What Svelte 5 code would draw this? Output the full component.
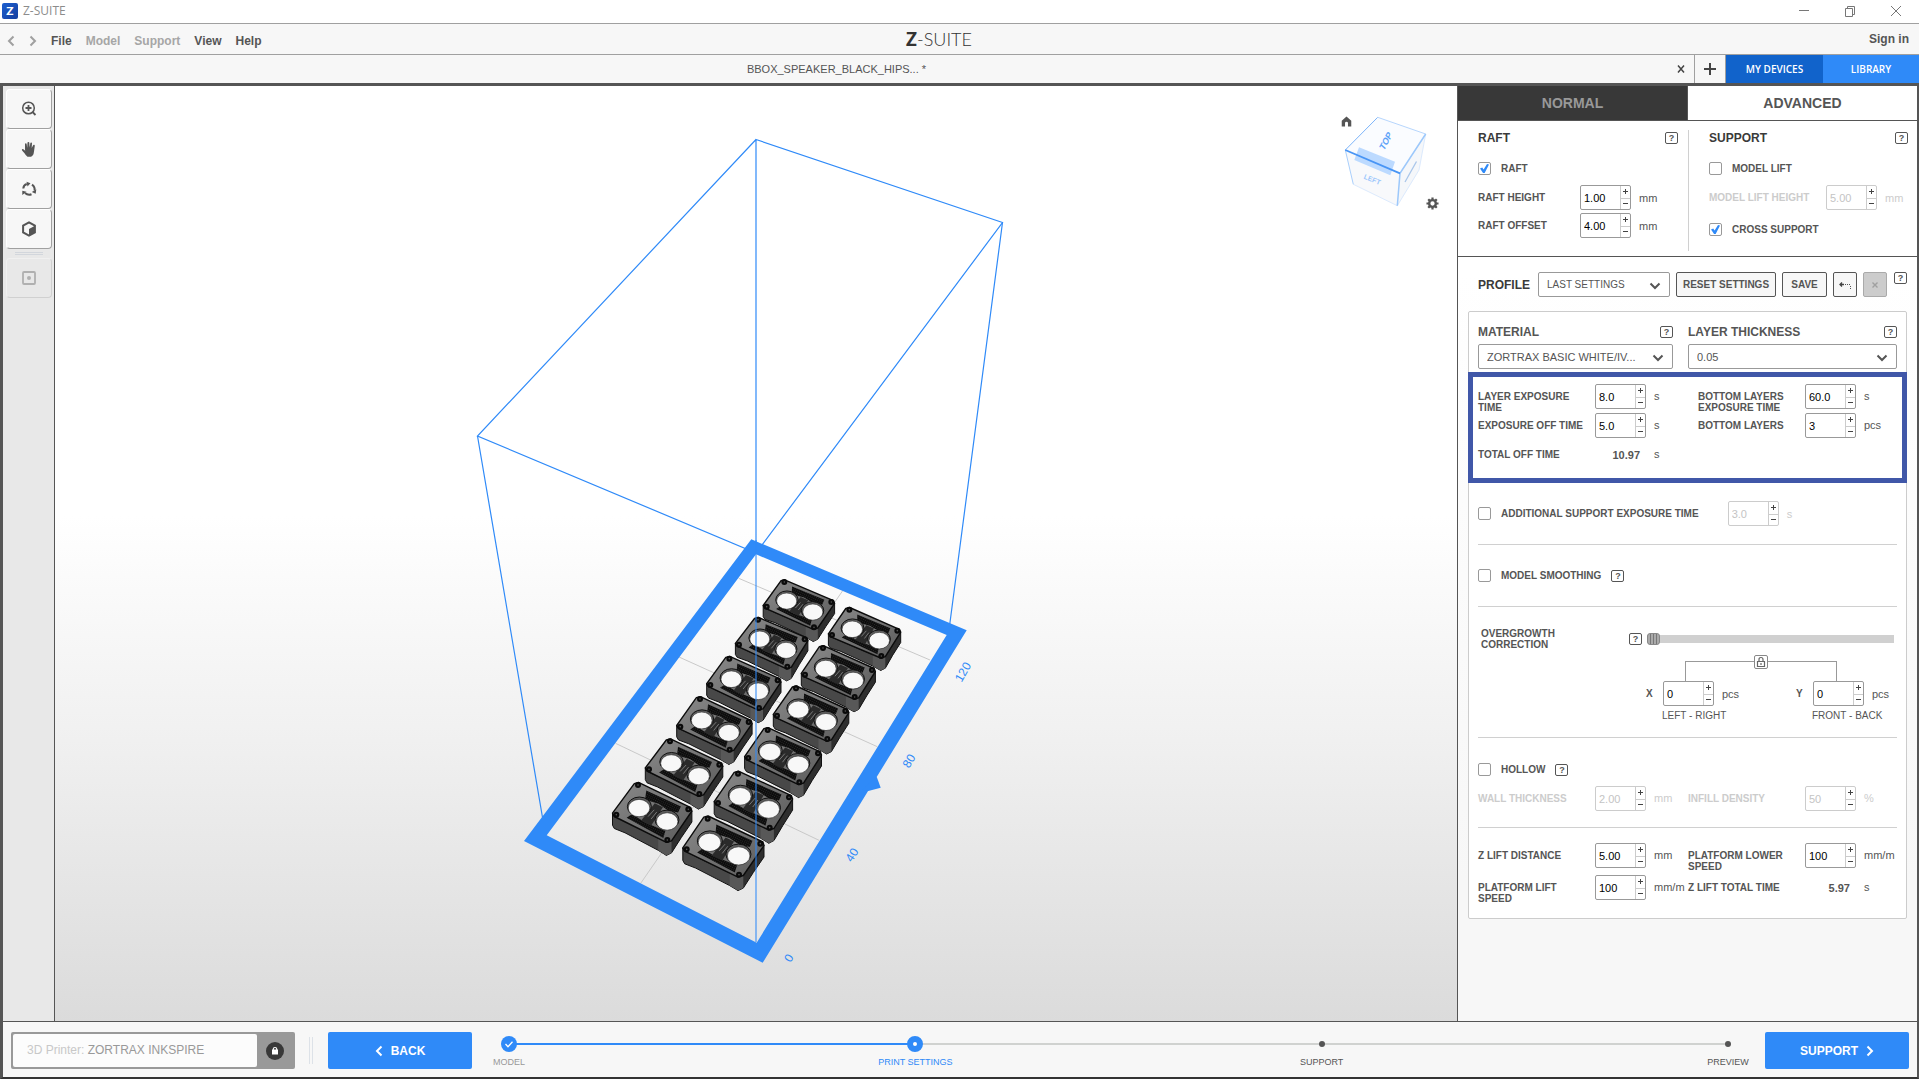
<script>
  const menu = [
    { label: 'File', off: false },
    { label: 'Model', off: true },
    { label: 'Support', off: true },
    { label: 'View', off: false },
    { label: 'Help', off: false },
  ];

  const steps = [
    { label: 'MODEL', state: 'done' },
    { label: 'PRINT SETTINGS', state: 'current' },
    { label: 'SUPPORT', state: 'todo' },
    { label: 'PREVIEW', state: 'todo' },
  ];

  // Screw positions of every part on the platform: top, right, left, bottom
  const parts = [
    [853, 186, 994, 246, 800, 260, 942, 322],
    [1048, 269, 1192, 332, 996, 345, 1144, 408],
    [774, 299, 914, 358, 717, 374, 862, 440],
    [969, 384, 1116, 450, 915, 464, 1064, 531],
    [688, 416, 833, 481, 631, 495, 777, 564],
    [888, 505, 1036, 573, 831, 587, 982, 657],
    [600, 537, 746, 606, 541, 620, 689, 689],
    [803, 630, 954, 700, 745, 714, 898, 787],
    [510, 664, 658, 734, 447, 748, 598, 822],
    [714, 761, 867, 832, 654, 849, 809, 923],
    [414, 795, 565, 868, 349, 884, 502, 960],
    [623, 896, 781, 971, 560, 988, 717, 1064],
  ].map((c) => build(c));

  function build(c) {
    const at = (u, v, down = 0) => {
      const mix = (i) =>
        (1 - u) * (1 - v) * c[i] + u * (1 - v) * c[i + 2] + (1 - u) * v * c[i + 4] + u * v * c[i + 6];
      return [500 + mix(0) / 3, 520 + mix(1) / 3 + down];
    };
    const path = (pts) =>
      'M' + pts.map((p) => at(...p).map((n) => n.toFixed(1)).join(' ')).join('L') + 'Z';
    const s = (c[2] - c[0]) / 151;
    const d = 12 * s;
    const a = -0.07;
    const b = 1.07;
    const ring = [[a + 0.05, a], [b - 0.05, a], [b, a + 0.07], [b, b - 0.1], [b - 0.06, b], [a + 0.06, b], [a, b - 0.06], [a, a + 0.08]];
    return {
      s,
      top: path(ring),
      left: path([[a, b - 0.06], [a + 0.06, b], [b - 0.06, b], [b - 0.06, b, d + 1], [0.85, b, d], [0.2, b, d - 1], [a + 0.06, b, d], [a, b - 0.06, d]]),
      right: path([[b - 0.06, b], [b, b - 0.1], [b, a + 0.07], [b, a + 0.07, d - 1], [b, 0.5, d - 1], [b, b - 0.1, d], [b - 0.06, b, d + 1]]),
      shade: path([[0.85, b], [b - 0.06, b], [b, b - 0.1], [b, b - 0.1, d], [b - 0.06, b, d + 1], [0.85, b, d]]),
      meshA: path([[0.18, 0.04], [0.86, 0.02], [0.88, 0.2], [0.72, 0.27], [0.5, 0.22], [0.26, 0.28]]),
      meshB: path([[0.18, 0.95], [0.22, 0.79], [0.5, 0.84], [0.88, 0.8], [0.92, 1]]),
      core: path([[0.44, 0.25], [0.6, 0.25], [0.62, 0.85], [0.42, 0.85]]),
      slotA: [at(0.5, 0.42), at(0.48, 0.66)],
      slotB: [at(0.56, 0.44), at(0.55, 0.68)],
      holes: [at(0.26, 0.56), at(0.81, 0.55)],
      rims: [at(0.25, 0.52), at(0.79, 0.51)],
      screws: [at(0, 0), at(1, 0), at(0, 1), at(1, 1)],
    };
  }
</script>

{#snippet help(topic)}
  <button class="help" aria-label={'Help: ' + topic}>?</button>
{/snippet}

{#snippet spin(id, value, disabled = false)}
  <span class="spin" class:off={disabled}>
    <input {id} type="text" {value} {disabled} />
    <span class="arrows">
      <button aria-label="Increase"><svg viewBox="0 0 9 9"><path d="M4.5 2v5M2 4.5h5" /></svg></button>
      <button aria-label="Decrease"><svg viewBox="0 0 9 9"><path d="M2 4.5h5" /></svg></button>
    </span>
  </span>
{/snippet}

{#snippet drop(id, value, small = false)}
  <span class="drop" class:small>
    <select {id} aria-label={id}><option>{value}</option></select>
    <svg viewBox="0 0 12 8"><path d="M1.5 1.5L6 6l4.500-4.500" /></svg>
  </span>
{/snippet}

<div class="app">
  <header class="titlebar">
    <span class="appicon">Z</span>
    <span class="apptitle">Z-SUITE</span>
    <div class="winbtns">
      <button aria-label="Minimize"><svg viewBox="0 0 12 12"><path d="M1 5.500h10" /></svg></button>
      <button aria-label="Restore"><svg viewBox="0 0 12 12"><path d="M1.500 3.500h7v8h-7zM3.500 3.500v-2h7v8h-2" /></svg></button>
      <button aria-label="Close"><svg viewBox="0 0 12 12"><path d="M1 1l10 10M11 1L1 11" /></svg></button>
    </div>
  </header>

  <nav class="menubar">
    <div class="menuleft">
      <button class="hist" aria-label="Undo"><svg viewBox="0 0 8 12"><path d="M6.500 1.500L2 6l4.500 4.500" /></svg></button>
      <button class="hist" aria-label="Redo"><svg viewBox="0 0 8 12"><path d="M1.500 1.500L6 6l-4.500 4.500" /></svg></button>
      {#each menu as m}
        <button class="menu" class:dim={m.off}>{m.label}</button>
      {/each}
    </div>
    <div class="logo"><b>Z</b><span>-SUITE</span></div>
    <a class="signin" href="#signin">Sign in</a>
  </nav>

  <div class="tabbar">
    <div class="filetab">
      <span class="filename">BBOX_SPEAKER_BLACK_HIPS... *</span>
      <button class="closetab" aria-label="Close file"><svg viewBox="0 0 10 10"><path d="M2 1.500l6 7M8 1.500l-6 7" /></svg></button>
    </div>
    <button class="addtab" aria-label="New file"><svg viewBox="0 0 14 14"><path d="M7 1v12M1 7h12" /></svg></button>
    <button class="devices">MY DEVICES</button>
    <button class="library">LIBRARY</button>
  </div>

  <main class="work">
    <aside class="tools">
      <button aria-label="Zoom">
        <svg viewBox="0 0 16 16"><circle cx="7.500" cy="7" r="5.800" fill="none" stroke="#555" stroke-width="1.500" /><path d="M7.500 4v6M4.500 7h6M11.500 11l3 3" fill="none" stroke="#555" stroke-width="1.800" /></svg>
      </button>
      <button aria-label="Pan">
        <svg viewBox="0 0 16 16"><path d="M4 8.500V3.200q0-.9.800-.9t.9.900L6.200 7l.3-5.200q0-.9.900-.9t.9.900L8.600 6.500l.7-4.300q.1-.8.900-.8t.8.900l-.3 4.700 1.400-2.800q.4-.7 1.100-.4t.6 1L13 10.500q-.5 4.500-3 5.200H6.500Q5 15 3.500 12.300L1.100 9.500q-.5-.7 0-1.200t1.300-.1L4.200 9.700z" fill="#555" /></svg>
      </button>
      <button aria-label="Rotate">
        <svg viewBox="0 0 16 16"><g fill="none" stroke="#555" stroke-width="2"><path d="M2.300 7.500Q2.500 4 5.800 3" /><path d="M11 3.600Q14.300 6 13.500 9.500" /><path d="M10.500 13.200Q7 14.600 4 12" /></g><path d="M5.500.8l4 1.500-3 3.200zM15.300 8.300l-.6 4.400-3.900-1.600zM1.300 14V9.700l4.200 1.100z" fill="#555" /></svg>
      </button>
      <button aria-label="Perspective">
        <svg viewBox="0 0 16 16"><path d="M8 1.400l5.900 3.300v6.700L8 14.700l-5.900-3.300V4.700z" fill="none" stroke="#555" stroke-width="2" /><path d="M8 8l5.500-3v6.500L8 14.500z" fill="#555" /></svg>
      </button>
      <div class="toolsep"></div>
      <button class="inactive" aria-label="Center model" disabled>
        <svg viewBox="0 0 16 16"><rect x="2" y="2" width="12" height="12" rx="1" fill="none" stroke="#b0b0b0" stroke-width="1.800" /><circle cx="8" cy="8" r="2" fill="#b0b0b0" /></svg>
      </button>
    </aside>

    <section class="viewport" aria-label="Build platform">
      <svg class="scene" viewBox="55 86 1402 935">
        <defs>
          <pattern id="mesh" width="2" height="2" patternUnits="userSpaceOnUse" patternTransform="rotate(25)">
            <rect width="2" height="2" fill="#0b0b0b" />
            <rect width="0.700" height="0.700" fill="#4a4a4a" />
          </pattern>
          <linearGradient id="lid" x1="0" y1="0" x2="1" y2="1">
            <stop offset="0" stop-color="#8a8a8a" />
            <stop offset="1" stop-color="#5c5c5c" />
          </linearGradient>
        </defs>
        <g stroke="#2f8af8" stroke-width="1.200" fill="none">
          <path d="M756 553V139.500L1002.500 222.500L756 553L477.500 436L756 139.500" />
          <path d="M477.500 436L546 838M1002.500 222.500L949 630" />
        </g>
        <path d="M756 554.300L946.700 635L756.700 942.700L546.700 835.300Z" fill="#fff" fill-opacity=".15" />
        <g stroke="#c9c9c9" fill="none">
          <path d="M738.700 578.300L930 660M679 657L877.300 746.700M615.500 743.300L819 840.300M842.700 590.700L640.700 883.300" />
        </g>
        <path fill="#2f8af8" fill-rule="evenodd" d="M751.300 539.300L966.700 630.300L762.700 962.700L524 841ZM756 554.300L546.700 835.300L756.700 942.700L946.700 635Z" />
        <path fill="#2f8af8" d="M876.700 776.700L880.700 787.700L868.300 791L862 790Z" />
        {#each parts as p}
          <g stroke-linejoin="round">
            <path d={p.left} fill="#484848" stroke="#111" />
            <path d={p.right} fill="#2e2e2e" stroke="#111" />
            <path d={p.shade} fill="#585858" />
            <path d={p.top} fill="url(#lid)" stroke="#0c0c0c" stroke-width="1.400" />
            <path d={p.meshA} fill="url(#mesh)" />
            <path d={p.meshB} fill="url(#mesh)" />
            <path d={p.core} fill="#2a2a2a" />
            {#each p.rims as r}
              <ellipse cx={r[0]} cy={r[1]} rx={12 * p.s} ry={9.600 * p.s} fill="#5c5c5c" stroke="#111" />
            {/each}
            {#each p.holes as h}
              <ellipse cx={h[0]} cy={h[1]} rx={10.800 * p.s} ry={8.700 * p.s} fill="#f8f8f8" stroke="#222" stroke-width=".6" />
            {/each}
            <path d="M{p.slotA[0]}L{p.slotA[1]}M{p.slotB[0]}L{p.slotB[1]}" stroke="#999" stroke-width=".7" />
            {#each p.screws as w}
              <circle cx={w[0]} cy={w[1]} r="3" fill="#0a0a0a" />
              <circle cx={w[0]} cy={w[1]} r=".8" fill="#555" />
            {/each}
          </g>
        {/each}
        <path d="M756 540V942" stroke="#2f8af8" stroke-opacity=".7" stroke-width="1.500" />
        <g class="marks">
          <text transform="translate(963 672) rotate(-60)">120</text>
          <text transform="translate(909 761) rotate(-59)">80</text>
          <text transform="translate(852 855) rotate(-58)">40</text>
          <text transform="translate(789 958) rotate(-58)">0</text>
        </g>
      </svg>

      <div class="cube">
        <svg viewBox="0 0 125 125">
          <path d="M15.300 50L47.700 17.300L95.700 34L70 73.300Z" fill="#fafcff" />
          <path d="M15.300 50L70 73.300L67.300 105.700L23.300 84.300Z" fill="#f8f9fb" />
          <path d="M70 73.300L95.700 34L89 70L67.300 105.700Z" fill="#f5f7fa" />
          <path d="M29 47.300L65 61.700L60.300 75.300L24.300 60Z" fill="#bcdaff" />
          <path d="M95.700 34L89 70L67.300 105.700L23.300 84.300" fill="none" stroke="#dceafd" />
          <path d="M23.300 84.300L15.300 50" fill="none" stroke="#a9cffc" />
          <path d="M15.300 50L47.700 17.300" fill="none" stroke="#7db5fa" />
          <path d="M47.700 17.300L95.700 34" fill="none" stroke="#b7d6fd" />
          <path d="M95.700 34L70 73.300L67.300 105.700" fill="none" stroke="#9cc8fb" stroke-width="1.500" />
          <path d="M15.300 50L70 73.300" fill="none" stroke="#4895f5" stroke-width="1.800" />
          <path d="M75 82L86.500 61.500" fill="none" stroke="#a9c6ea" stroke-width="1.300" />
          <text class="face" font-size="9" transform="translate(56 41) rotate(-62) skewX(-12)" dy="3">TOP</text>
          <text class="face pale" font-size="7" transform="translate(42.500 79) rotate(22)" dy="3">LEFT</text>
        </svg>
        <button class="home" aria-label="Home view"><svg viewBox="0 0 12 12"><path d="M6 .5l5.200 4.800v6.200H7.600V7.600q0-1.200-1.600-1.200T4.400 7.600v3.900H.8V5.300z" fill="#555" /></svg></button>
        <button class="gear" aria-label="View settings"><svg viewBox="0 0 14 14"><circle cx="7" cy="7" r="3.600" fill="none" stroke="#555" stroke-width="2.600" /><path d="M7 .5v2.500M7 11v2.500M.5 7H3M11 7h2.500M2.400 2.400l1.800 1.800M9.800 9.800l1.800 1.800M2.400 11.600l1.800-1.800M9.800 4.200l1.800-1.800" stroke="#555" stroke-width="2.400" /></svg></button>
      </div>
    </section>

    <aside class="panel">
      <div class="modes">
        <button class="mode">NORMAL</button>
        <button class="mode active">ADVANCED</button>
      </div>

      <div class="basics">
        <section class="raft">
          <div class="head"><h2>RAFT</h2>{@render help('raft')}</div>
          <label class="check first"><input type="checkbox" checked />RAFT</label>
          <div class="pair"><label for="raft-height">RAFT HEIGHT</label>{@render spin('raft-height', '1.00')}<span class="unit">mm</span></div>
          <div class="pair"><label for="raft-offset">RAFT OFFSET</label>{@render spin('raft-offset', '4.00')}<span class="unit">mm</span></div>
        </section>
        <section class="supp">
          <div class="head"><h2>SUPPORT</h2>{@render help('support')}</div>
          <label class="check first"><input type="checkbox" />MODEL LIFT</label>
          <div class="pair dim"><label for="lift-height">MODEL LIFT HEIGHT</label>{@render spin('lift-height', '5.00', true)}<span class="unit">mm</span></div>
          <label class="check cross"><input type="checkbox" checked />CROSS SUPPORT</label>
        </section>
      </div>

      <div class="profile">
        <h2>PROFILE</h2>
        {@render drop('profile', 'LAST SETTINGS', true)}
        <button class="btn reset">RESET SETTINGS</button>
        <button class="btn save">SAVE</button>
        <button class="btn icon" aria-label="Undo changes"><svg viewBox="0 0 12 12"><path d="M1 5.500h4M3 3.500l-2 2 2 2" fill="none" stroke="#444" stroke-width="1.300" /><path d="M6 5.500h6M11.500 7v4" fill="none" stroke="#555" stroke-dasharray="1 1" /></svg></button>
        <button class="btn icon gone" aria-label="Delete profile" disabled><svg viewBox="0 0 12 12"><path d="M3.500 3.500l5 5M8.500 3.500l-5 5" fill="none" stroke="#a0a0a0" stroke-width="1.400" /></svg></button>
        {@render help('profile')}
      </div>

      <div class="card">
        <div class="choices">
          <div>
            <div class="head"><h2 class="soft">MATERIAL</h2>{@render help('material')}</div>
            {@render drop('material', 'ZORTRAX BASIC WHITE/IV...')}
          </div>
          <div>
            <div class="head"><h2 class="soft">LAYER THICKNESS</h2>{@render help('layer thickness')}</div>
            {@render drop('thickness', '0.05')}
          </div>
        </div>

        <div class="exposure">
          <div class="fields">
            <label for="layer-exp">LAYER EXPOSURE<br />TIME</label>{@render spin('layer-exp', '8.0')}<span class="unit">s</span>
            <label class="in" for="bottom-exp">BOTTOM LAYERS<br />EXPOSURE TIME</label>{@render spin('bottom-exp', '60.0')}<span class="unit">s</span>
            <label for="exp-off">EXPOSURE OFF TIME</label>{@render spin('exp-off', '5.0')}<span class="unit">s</span>
            <label class="in" for="bottom-layers">BOTTOM LAYERS</label>{@render spin('bottom-layers', '3')}<span class="unit">pcs</span>
            <span class="lbl">TOTAL OFF TIME</span><output>10.97</output><span class="unit">s</span>
          </div>
        </div>

        <section class="row">
          <label class="check"><input type="checkbox" />ADDITIONAL SUPPORT EXPOSURE TIME</label>
          <span class="extra dim">{@render spin('extra-exp', '3.0', true)}<label class="unit" for="extra-exp">s</label></span>
        </section>

        <section class="row">
          <label class="check"><input type="checkbox" />MODEL SMOOTHING</label>
          {@render help('model smoothing')}
        </section>

        <section class="growth">
          <div class="slide">
            <label for="growth">OVERGROWTH<br />CORRECTION</label>
            {@render help('overgrowth correction')}
            <input id="growth" type="range" min="0" max="10" value="0" />
          </div>
          <div class="link">
            <button aria-label="Lock X and Y"><svg viewBox="0 0 12 12"><path d="M2.500 5.500h7v5h-7zM4 5.500V3.500Q4 1.500 6 1.500T8 3.500v2M6 7v2" fill="none" stroke="#666" stroke-width="1.200" /></svg></button>
          </div>
          <div class="axes">
            <label for="gx">X</label>{@render spin('gx', '0')}<span class="unit">pcs</span>
            <label for="gy">Y</label>{@render spin('gy', '0')}<span class="unit">pcs</span>
            <span class="cap">LEFT - RIGHT</span><span class="cap second">FRONT - BACK</span>
          </div>
        </section>

        <section class="hollow">
          <div class="hrow">
            <label class="check"><input type="checkbox" />HOLLOW</label>
            {@render help('hollow')}
          </div>
          <div class="fields dim">
            <label for="wall">WALL THICKNESS</label>{@render spin('wall', '2.00', true)}<span class="unit">mm</span>
            <label for="infill">INFILL DENSITY</label>{@render spin('infill', '50', true)}<span class="unit">%</span>
          </div>
        </section>

        <section class="lift">
          <div class="fields">
            <label for="z-dist">Z LIFT DISTANCE</label>{@render spin('z-dist', '5.00')}<span class="unit">mm</span>
            <label for="lower">PLATFORM LOWER<br />SPEED</label>{@render spin('lower', '100')}<span class="unit">mm/m</span>
            <label for="speed">PLATFORM LIFT<br />SPEED</label>{@render spin('speed', '100')}<span class="unit">mm/m</span>
            <span class="lbl">Z LIFT TOTAL TIME</span><output>5.97</output><span class="unit">s</span>
          </div>
        </section>
      </div>
    </aside>
  </main>

  <footer class="bottom">
    <div class="printer">
      <div class="pname"><span>3D Printer:</span> ZORTRAX INKSPIRE</div>
      <button aria-label="Printer locked"><svg viewBox="0 0 18 18"><circle cx="9" cy="9" r="9" fill="#383838" /><path d="M6 7.500h6V12.500H6z" fill="#fff" /><path d="M7.300 8V6.800Q7.300 5.500 9 5.500t1.700 1.300V8" fill="none" stroke="#fff" stroke-width="1.100" /></svg></button>
    </div>
    <div class="grip"></div>
    <button class="go"><svg viewBox="0 0 8 12"><path d="M6.500 1.500L2 6l4.500 4.500" /></svg>BACK</button>
    <ol class="steps">
      {#each steps as s}
        <li class={s.state}>
          <span class="dot">
            {#if s.state === 'done'}<svg viewBox="0 0 16 16"><path d="M4.500 8l2.500 2.800 4.500-5" /></svg>{/if}
          </span>
          <span class="stepname">{s.label}</span>
        </li>
      {/each}
    </ol>
    <button class="go">SUPPORT<svg viewBox="0 0 8 12"><path d="M1.500 1.500L6 6l-4.500 4.500" /></svg></button>
  </footer>
</div>

<style>
  :global(body) {
    margin: 0;
    font-family: 'Liberation Sans', Arial, sans-serif;
    color: #555;
  }
  .app, .app :global(*) { box-sizing: border-box; }
  .app {
    min-height: 100vh;
    display: grid;
    grid-template-rows: 24px 31px 31px 1fr 57px;
    background: #f7f7f7;
  }
  button { font: inherit; color: inherit; background: none; border: 0; padding: 0; margin: 0; }
  svg { display: block; }
  h2 { margin: 0; font-size: 12px; line-height: 14px; color: #3a3a3a; font-weight: bold; }
  h2.soft { color: #555; }

  .titlebar { display: flex; align-items: center; background: #fff; border-bottom: 1px solid #a0a0a0; padding: 0 17px 2px 2px; }
  .appicon { width: 16px; height: 16px; border-radius: 2px; background: linear-gradient(135deg, #1c5fd0, #163f9e); color: #fff; font: 900 12px/16px Lato, sans-serif; text-align: center; }
  .apptitle { margin-left: 5px; font: 12px 'Open Sans', sans-serif; color: #8c8c8c; }
  .winbtns { margin-left: auto; display: flex; gap: 34px; }
  .winbtns svg { width: 12px; height: 12px; fill: none; stroke: #777; }

  .menubar { display: grid; grid-template-columns: 1fr auto 1fr; align-items: center; border-bottom: 1px solid #a0a0a0; padding: 0 10px 0 7px; font-size: 12px; font-weight: bold; }
  .menuleft { display: flex; align-items: center; gap: 14px; padding-top: 4px; }
  .hist svg { width: 8px; height: 12px; fill: none; stroke: #a0a0a0; stroke-width: 2; }
  .dim, .menu.dim { color: #a6a6a6; }
  .logo { display: flex; margin-right: 38px; font: 300 18px/20px Lato, sans-serif; color: #333; }
  .logo b { font-weight: 900; }
  .signin { justify-self: end; color: #555; text-decoration: none; }

  .tabbar { display: flex; border-bottom: 3px solid #555; }
  .filetab { flex: 1; display: flex; align-items: center; font-size: 11px; padding-right: 8px; }
  .filename { flex: 1; text-align: center; padding-right: 3px; }
  .closetab svg { width: 10px; height: 10px; fill: none; stroke: #444; stroke-width: 1.500; }
  .addtab { width: 32px; border: solid #a0a0a0; border-width: 0 1px; display: grid; place-items: center; }
  .addtab svg { width: 14px; height: 14px; stroke: #444; stroke-width: 2; }
  .devices, .library { width: 97px; background: #1163cb; color: #fff; font: 600 10px 'Open Sans', sans-serif; }
  .library { width: 96px; background: #2f8af8; }

  .work { display: grid; grid-template-columns: 52px 1fr 460px; border: solid #555; border-width: 0 2px 1px 3px; }
  .tools { background: #e8e8e8; border-right: 1px solid #555; padding: 3px 2px 0 3px; }
  .tools button { display: grid; place-items: center; width: 100%; height: 40px; background: #f7f7f7; border: 1px solid #fff; border-right-color: #a0a0a0; border-bottom-color: #a0a0a0; border-radius: 4px; }
  .tools svg { width: 16px; height: 16px; }
  .tools button.inactive { background: #e8e8e8; border-color: #f0f0f0 #d0d0d0 #d0d0d0 #f0f0f0; }
  .toolsep { width: 28px; height: 3px; margin: 3px auto; border: solid #d2d6dc; border-width: 1px 0; }

  .viewport { position: relative; background: linear-gradient(#fff 46%, #f0f0f0 70%, #dbdbdb); min-width: 0; }
  .scene { position: absolute; inset: 0; width: 100%; height: 100%; }
  .marks text { font-size: 12px; fill: #2f8af8; text-anchor: middle; dominant-baseline: central; }
  .cube { position: absolute; top: 14px; right: 2px; width: 125px; height: 125px; }
  .face { fill: #5ea3f8; font-weight: bold; text-anchor: middle; }
  .face.pale { fill: #9cc7fc; }
  .home, .gear { position: absolute; left: 11px; top: 16px; width: 11px; height: 11px; }
  .gear { left: 96px; top: 97px; width: 13px; height: 13px; }

  .panel { border-left: 1px solid #555; background: linear-gradient(#fff 20%, #f7f7f7 85%); min-width: 0; }
  .modes { display: flex; height: 35px; border-bottom: 1px solid #555; }
  .mode { flex: 1; font-size: 14px; font-weight: bold; background: #383838; color: #999; }
  .mode.active { background: #fff; color: #555; border-left: 1px solid #555; }

  .basics { display: grid; grid-template-columns: 231px 1fr; padding: 9px 0 5px; border-bottom: 1px solid #555; background: #fff; }
  .raft { border-right: 1px solid #d0d0d0; padding: 1px 10px 10px 20px; }
  .supp { padding: 1px 9px 0 20px; }
  .head { display: flex; justify-content: space-between; align-items: center; height: 14px; }
  .check { display: flex; align-items: center; gap: 10px; font-size: 10px; line-height: 13px; font-weight: bold; }
  .check.first { margin: 17px 0 10px; }
  .check.cross { margin-top: 13px; }
  .check input { appearance: none; width: 13px; height: 13px; margin: 0; border: 1px solid #999; border-radius: 2px; background: #fff; display: grid; place-items: center; }
  .check input:checked::before { content: ''; width: 9px; height: 9px; background: #2f8af8; clip-path: polygon(0 50%, 25% 40%, 40% 62%, 78% 0, 100% 6%, 52% 100%, 34% 100%); }
  .pair { display: grid; grid-template-columns: 102px 51px 1fr; align-items: center; margin-bottom: 3px; }
  .supp .pair { grid-template-columns: 117px 51px 1fr; margin-bottom: 0; }
  .pair label, .fields label, .lbl, .slide label, .axes label { font-size: 10px; line-height: 11px; font-weight: bold; }
  .unit { font-size: 11px; line-height: 12px; padding-left: 8px; }
  .dim .unit, .dim label { color: #ccc; }

  .help { width: 13px; height: 12px; border: 1px solid #555; border-radius: 2px; background: #fff; font-size: 9px; font-weight: bold; line-height: 10px; text-align: center; flex: none; }

  .spin { display: flex; width: 51px; height: 25px; border: 1px solid #999; border-radius: 2px; background: #fff; }
  .spin input { flex: 1; min-width: 0; border: 0; padding: 1px 0 0 3px; margin: 0; background: none; font: 11px 'Liberation Sans', Arial, sans-serif; color: #000; }
  .arrows { width: 10px; display: grid; grid-template-rows: 1fr 1fr; border-left: 1px solid #ccc; }
  .arrows button { display: grid; place-items: center; }
  .arrows button + button { border-top: 1px solid #ccc; }
  .arrows svg { width: 9px; height: 9px; stroke: #444; }
  .spin.off { border-color: #ccc; }
  .spin.off input { color: #c4c4c4; }

  .drop { position: relative; display: block; height: 25px; }
  .drop select { appearance: none; width: 100%; height: 25px; border: 1px solid #999; border-radius: 2px; background: #fff; padding: 0 8px; font: 11px 'Liberation Sans', Arial, sans-serif; color: #555; }
  .drop svg { position: absolute; right: 9px; top: 10px; width: 12px; height: 8px; fill: none; stroke: #555; stroke-width: 2; }
  .drop.small { width: 132px; margin-right: 6px; }
  .drop.small select { font-size: 10px; }

  .profile { display: flex; align-items: center; padding: 15px 10px 14px 20px; }
  .profile h2 { width: 60px; }
  .profile .help { align-self: flex-start; margin-left: 1px; }
  .btn { height: 25px; border: 1px solid #555; border-radius: 2px; background: #f7f7f7; font-size: 10px; font-weight: bold; margin-right: 6px; display: grid; place-items: center; }
  .reset { width: 100px; }
  .save { width: 45px; }
  .icon { width: 24px; }
  .icon svg { width: 12px; height: 12px; }
  .gone { background: #ccc; border-color: #aaa; }

  .card { margin: 0 10px; border: 1px solid #ccc; border-radius: 2px; background: #fff; padding: 0 9px; }
  .choices { display: grid; grid-template-columns: 195px 1fr; gap: 15px; padding: 12px 0 3px; }
  .choices .head { margin: 1px 0 5px; }
  .exposure { margin: 0 -10px; border: 5px solid #4057a8; padding: 7px 5px 11px; }
  .fields { display: grid; grid-template-columns: 117px 51px 42px 117px 51px 1fr; grid-auto-rows: 25px; row-gap: 4px; align-items: start; }
  .fields label, .lbl { padding-top: 7px; white-space: nowrap; }
  .fields label.in { padding-left: 10px; }
  .fields .unit { padding-top: 6px; white-space: nowrap; }
  output { font-size: 11px; line-height: 12px; font-weight: bold; text-align: right; padding: 7px 6px 6px 0; }
  .card section { border-bottom: 1px solid #d0d0d0; }
  .card section:last-child { border-bottom: 0; }
  .row { display: flex; align-items: center; height: 62px; }
  .row > :global(.help), .hrow > :global(.help) { margin-left: 10px; }
  .extra { display: flex; align-items: center; margin-left: 29px; }
  .growth { padding: 20px 0 15px; }
  .slide { display: flex; align-items: center; height: 24px; padding: 0 3px; }
  .slide label { width: 148px; }
  .slide input { appearance: none; flex: 1; min-width: 0; height: 12px; margin: 0 0 0 5px; background: linear-gradient(transparent 2px, #d0d0d0 2px, #d0d0d0 10px, transparent 10px); }
  .slide input::-webkit-slider-thumb { appearance: none; width: 13px; height: 12px; border: 1px solid #888; border-radius: 3px; background: repeating-linear-gradient(90deg, #aaa 0 2px, #777 2px 3px); }
  .link { position: relative; height: 26px; margin: 4px 60px 0 207px; padding-top: 6px; }
  .link::before { content: ''; display: block; height: 20px; border: 1px solid #999; border-bottom: 0; }
  .link button { position: absolute; top: 0; left: 69px; width: 14px; height: 14px; border: 1px solid #888; border-radius: 2px; background: #fff; }
  .axes { display: grid; grid-template-columns: 17px 51px 82px 17px 51px 1fr; align-items: center; padding-left: 168px; row-gap: 4px; }
  .cap { grid-column: 1 / 4; padding-left: 16px; font-size: 10px; line-height: 12px; }
  .cap.second { grid-column: 4 / 7; }
  .hollow { padding: 19px 0 16px; }
  .hrow { display: flex; align-items: center; height: 25px; margin-bottom: 4px; }
  .lift { padding: 15px 0 18px; }
  .lift .fields { row-gap: 7px; }

  .bottom { display: flex; align-items: center; padding: 2px 8px 0; border: solid #555; border-width: 0 2px 2px 3px; border-bottom-color: #333; }
  .printer { display: flex; width: 284px; height: 37px; background: #999; border: 2px solid #999; border-radius: 2px; }
  .pname { flex: 1; background: #fcfcfc; border-radius: 2px; font-size: 12px; line-height: 33px; padding-left: 14px; color: #999; }
  .pname span { color: #c8c8c8; }
  .printer button { width: 36px; display: grid; place-items: center; }
  .printer svg { width: 18px; height: 18px; }
  .grip { width: 4px; height: 27px; margin: 0 15px 0 14px; border: solid #dde2e8; border-width: 0 1px; }
  .go { width: 144px; height: 37px; background: #2f8af8; border-radius: 2px; color: #fff; font-size: 12px; font-weight: bold; display: flex; align-items: center; justify-content: center; gap: 8px; flex: none; }
  .go svg { width: 8px; height: 12px; fill: none; stroke: #fff; stroke-width: 2; }
  .steps { flex: 1; display: flex; margin: 0 37px; padding: 7px 0 0; list-style: none; font-size: 9px; }
  .steps li { flex: 1; position: relative; display: grid; grid-template-rows: 16px 20px; width: 0; }
  .steps li:last-child { flex: none; }
  .steps li:not(:last-child)::before { content: ''; position: absolute; top: 7px; left: 0; width: 100%; height: 2px; background: #d0d2d0; }
  .steps li.done::before { background: #2f8af8 !important; }
  .dot { position: relative; place-self: center start; width: 6px; height: 6px; margin-left: -3px; border-radius: 50%; background: #555; }
  .done .dot, .current .dot { width: 16px; height: 16px; margin-left: -8px; background: #2f8af8; }
  .current .dot { border: 6px solid #2f8af8; background: #fff; }
  .dot svg { fill: none; stroke: #fff; stroke-width: 1.300; }
  .stepname { justify-self: start; width: 120px; margin-left: -60px; text-align: center; align-self: center; white-space: nowrap; line-height: 12px; }
  .done .stepname { color: #999; }
  .current .stepname { color: #2f8af8; }
</style>
